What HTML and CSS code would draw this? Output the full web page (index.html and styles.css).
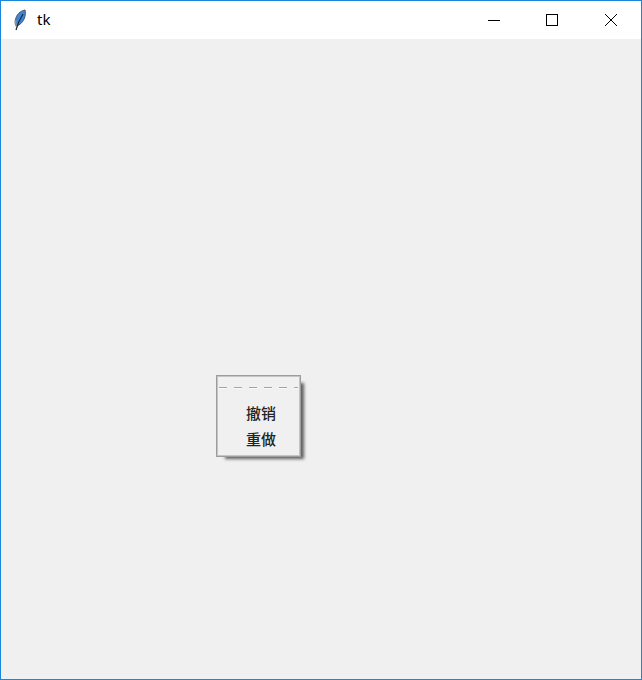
FILE: index.html
```html
<!DOCTYPE html>
<html lang="zh-CN">
<head>
    <meta charset="UTF-8">
    <title>tk</title>
    <link rel="stylesheet" href="styles.css">
</head>
<body>

    <div class="window">
        <!-- Title bar -->
        <div class="titlebar">
            <svg class="app-icon" width="16" height="22" viewBox="0 0 16 22">
                <path d="M13 1 C8 2 4 6 3.5 11 C3.3 13.5 3.6 15.5 4.5 17 C8 16 11 13 12.5 9 C13.5 6 13.7 3 13 1 Z" fill="#3a86dc" stroke="#4a5563" stroke-width="1"/>
                <path d="M3.5 11 C3.3 13.5 3.6 15.5 4.5 17" fill="none" stroke="#8a8f96" stroke-width="2"/>
                <path d="M11 5 C8.5 9 6 13 4 21" fill="none" stroke="#1d2630" stroke-width="1.2"/>
            </svg>
            <span class="title">tk</span>
            <div class="controls">
                <div class="control">
                    <svg width="12" height="12" viewBox="0 0 12 12"><path d="M0 6.5 H12" stroke="#000" fill="none"/></svg>
                </div>
                <div class="control">
                    <svg width="12" height="12" viewBox="0 0 12 12"><rect x="0.5" y="0.5" width="11" height="11" stroke="#000" fill="none"/></svg>
                </div>
                <div class="control control-close">
                    <svg width="12" height="12" viewBox="0 0 12 12"><path d="M0 0 L12 12 M12 0 L0 12" stroke="#000" stroke-width="1" fill="none"/></svg>
                </div>
            </div>
        </div>

        <div class="content"></div>

        <!-- Tearoff popup menu -->
        <div class="popup-menu">
            <div class="tearoff"></div>
            <div class="menu-item">撤销</div>
            <div class="menu-item">重做</div>
        </div>
    </div>

</body>
</html>
```

FILE: styles.css
```css
/* General Styling */
html, body {
    margin: 0;
    padding: 0;
    height: 100%;
}

body {
    font-family: "Noto Sans CJK SC", "Noto Sans", sans-serif;
    overflow: hidden;
}

.window {
    position: relative;
    box-sizing: border-box;
    width: 642px;
    height: 680px;
    display: flex;
    flex-direction: column;
    border: 1px solid #1b86da;
    background: #f0f0f0;
}

/* Title bar */
.titlebar {
    display: flex;
    align-items: center;
    height: 38px;
    background: white;
    flex-shrink: 0;
}

.app-icon {
    margin-left: 11px;
}

.title {
    margin-left: 9px;
    padding-bottom: 2px;
    font-family: "Noto Sans", "Open Sans", sans-serif;
    font-size: 15px;
    color: #000;
}

.controls {
    display: flex;
    margin-left: auto;
}

.control {
    width: 58px;
    height: 38px;
    display: flex;
    align-items: center;
    justify-content: center;
}

.control-close {
    width: 60px;
}

.content {
    flex: 1;
    background: #f0f0f0;
}

/* Popup menu */
.popup-menu {
    position: absolute;
    left: 215px;
    top: 374px;
    box-sizing: border-box;
    width: 85px;
    height: 82px;
    padding-top: 11px;
    background: #f0f0f0;
    border: 1px solid #9c9c9c;
    box-shadow: inset 1px 1px 0 #c4c4c4, inset -1px -1px 0 #c4c4c4, 6px 5px 3px -3px rgba(0, 0, 0, 0.6);
}

/* dashes with an etched white line under them */
.tearoff {
    height: 2px;
    margin: 0 2px 11px 2px;
    background:
        repeating-linear-gradient(to right, #a4a4a4 0 8px, transparent 8px 15px) top / 100% 1px no-repeat,
        repeating-linear-gradient(to right, #fafafa 0 8px, transparent 8px 15px) bottom / 100% 1px no-repeat;
}

.menu-item {
    height: 26px;
    line-height: 26px;
    padding-left: 5px;
    text-align: center;
    font-size: 15px;
    font-weight: 500;
    color: #222;
}
```
